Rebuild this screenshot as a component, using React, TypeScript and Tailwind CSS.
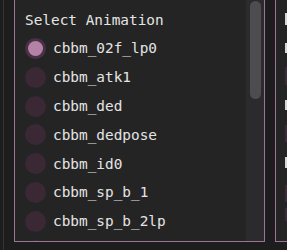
import React from "react";

const items = [
  "cbbm_02f_lp0",
  "cbbm_atk1",
  "cbbm_ded",
  "cbbm_dedpose",
  "cbbm_id0",
  "cbbm_sp_b_1",
  "cbbm_sp_b_2lp",
];

function Radio({ selected }: { selected: boolean }) {
  return (
    <div
      className={
        "w-[21px] h-[21px] rounded-full flex items-center justify-center shrink-0 " +
        (selected ? "bg-[#4a3044]" : "bg-[#3a2835]")
      }
    >
      {selected && <div className="w-[15px] h-[15px] rounded-full bg-[#b482a6]" />}
    </div>
  );
}

export default function App() {
  return (
    <div
      className="w-[287px] h-[250px] bg-[#1d1d1d] overflow-hidden flex text-[#e4e4e4]"
      style={{ fontFamily: '"DejaVu Sans Mono", monospace' }}
    >
      {/* left gutter */}
      <div className="w-[14px] shrink-0 flex">
        <div className="w-[3px]" />
        <div className="w-px h-full bg-[#333338]" />
      </div>

      {/* main panel */}
      <div className="w-[251px] h-[242px] shrink-0 border-l border-r border-b border-[#9d7496] bg-[#242424] flex overflow-hidden">
        <div className="flex-1 flex flex-col pl-[10px] overflow-hidden">
          <div className="h-[34px] shrink-0 flex items-center pt-[6px] text-[14.4px] leading-none">
            Select Animation
          </div>
          <div className="flex flex-col shrink-0">
            {items.map((name, i) => (
              <div key={name} className="h-[28.85px] shrink-0 flex items-center gap-[7px] text-[14.4px] leading-none">
                <Radio selected={i === 0} />
                <span>{name}</span>
              </div>
            ))}
            <div className="h-[28.85px] shrink-0 flex items-center">
              <Radio selected={false} />
            </div>
          </div>
        </div>
        {/* scrollbar */}
        <div className="w-[18px] h-full bg-[#2b2b2d] flex justify-center pt-px">
          <div className="w-[11px] h-[98px] rounded-full bg-[#4d4d50]" />
        </div>
      </div>

      {/* gap */}
      <div className="w-[10px] shrink-0" />

      {/* right panel */}
      <div className="flex-1 h-[242px] border-l border-b border-[#9d7496] bg-[#242424] flex pl-[9px]">
        <div className="flex flex-col w-[3px]">
          <div className="h-[13px] shrink-0" />
          <div className="h-[12px] shrink-0 bg-[#d8d8d8]" />
          <div className="h-[18px] shrink-0" />
          <div className="h-[10px] shrink-0 bg-[#d8d8d8]" />
          <div className="h-[14px] shrink-0" />
          <div className="h-[18px] shrink-0 bg-[#3e2a38]" />
          <div className="h-[15px] shrink-0" />
          <div className="h-[10px] shrink-0 bg-[#d8d8d8]" />
          <div className="h-[15px] shrink-0" />
          <div className="h-[17px] shrink-0 bg-[#3e2a38]" />
          <div className="h-[15px] shrink-0" />
          <div className="h-[11px] shrink-0 bg-[#d8d8d8]" />
          <div className="h-[17px] shrink-0" />
          <div className="h-[17px] shrink-0 bg-[#3e2a38]" />
          <div className="h-[6px] shrink-0" />
          <div className="h-[13px] shrink-0 bg-[#3e2a38]" />
        </div>
      </div>
    </div>
  );
}
